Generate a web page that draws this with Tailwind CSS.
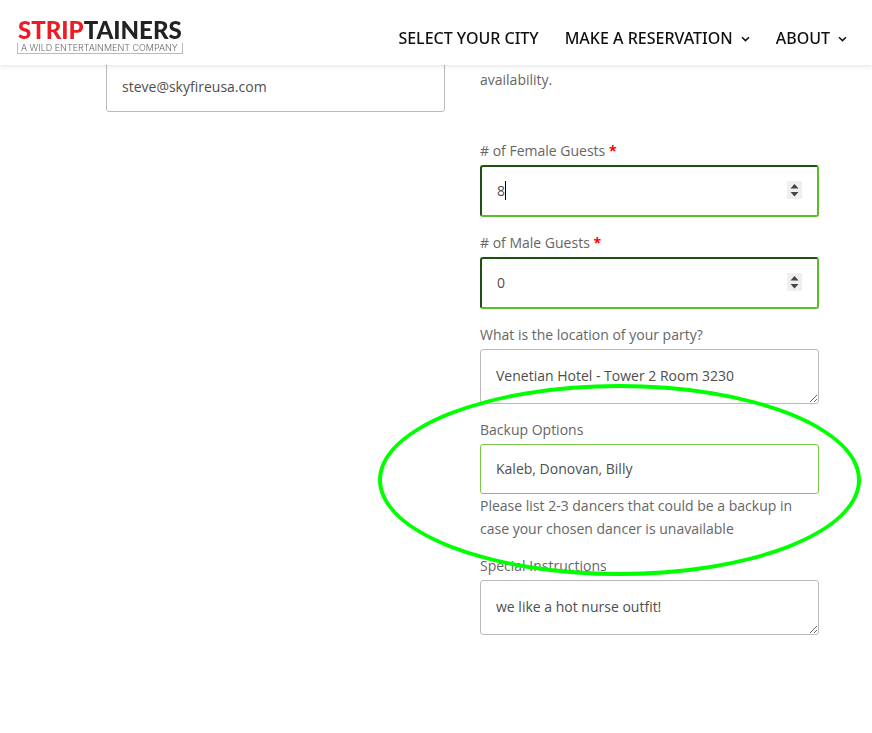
<!DOCTYPE html>
<html lang="en">
  <head>
    <meta charset="UTF-8" />
    <meta name="viewport" content="width=device-width, initial-scale=1.0" />
    <title>Make a Reservation - Striptainers</title>
    <script src="https://cdn.jsdelivr.net/npm/@tailwindcss/browser@4"></script>
  </head>
  <body class="bg-white min-h-screen font-['Open_Sans',sans-serif] text-[14px] leading-[23px] text-[#666]">

    <!-- Header -->
    <header class="fixed top-0 left-0 z-10 w-full h-[65px] bg-white shadow-[0_1px_5px_rgba(0,0,0,0.12)] pl-[17px] pr-[25px] flex justify-between items-center">
      <a href="#" class="flex flex-col gap-px pt-[6px]">
        <span class="px-px font-['Lato',sans-serif] font-black text-[24px] leading-[24px] text-[#222]"><span class="text-[#ec1c24]">STRIP</span>TAINERS</span>
        <span class="border-x border-b border-[#bbb] px-[3px] font-['Inter',sans-serif] font-light text-[9px] leading-[10px] text-[#666] whitespace-nowrap">A WILD ENTERTAINMENT COMPANY</span>
      </a>
      <nav class="flex items-center gap-[26px] pt-[12px] font-['Noto_Sans','Open_Sans',sans-serif] font-medium text-[16px] text-[#111]">
        <a href="#">SELECT YOUR CITY</a>
        <a href="#" class="flex items-center gap-2">MAKE A RESERVATION
          <svg class="w-[9px] h-[9px]" viewBox="0 0 9 9" fill="none" stroke="currentColor" stroke-width="1.5"><path d="M1 3.2 L4.5 6.6 L8 3.2" /></svg>
        </a>
        <a href="#" class="flex items-center gap-2">ABOUT
          <svg class="w-[9px] h-[9px]" viewBox="0 0 9 9" fill="none" stroke="currentColor" stroke-width="1.5"><path d="M1 3.2 L4.5 6.6 L8 3.2" /></svg>
        </a>
      </nav>
    </header>

    <!-- Booking form -->
    <main class="pt-[62px] pl-[106px] pr-[53px] pb-20">
      <form class="grid grid-cols-2 gap-[35px] items-start">
        <input type="email" aria-label="Email" value="steve@skyfireusa.com" class="block w-full h-[50px] px-[15px] pb-[2px] border border-[#bbb] rounded-[3px] text-[#4e4e4e]" />

        <div class="flex flex-col gap-[14px] pt-[6px]">
          <p class="mb-[34px]">availability.</p>

          <div>
            <label for="female" class="block mb-[3px]"># of Female Guests <span class="font-bold text-[#f00]">*</span></label>
            <div class="relative">
              <input id="female" type="number" value="8" class="block w-full h-[52px] px-[15px] pb-[2px] border-2 border-t-[#1d5210] border-l-[#1d5210] border-r-[#5abf26] border-b-[#5abf26] rounded-[3px] text-[#4e4e4e] appearance-none [&::-webkit-inner-spin-button]:appearance-none" />
              <span class="absolute left-[25px] top-[16px] w-px h-[19px] bg-black"></span>
              <svg class="absolute right-[17px] top-[16px] w-[15px] h-[18px]" viewBox="0 0 15 18"><rect width="15" height="18" fill="#efefef" /><path d="M3.5 7.5 L7.5 3 L11.5 7.5 Z M3.5 11 L7.5 15.5 L11.5 11 Z" fill="#444" /></svg>
            </div>
          </div>

          <div>
            <label for="male" class="block mb-[3px]"># of Male Guests <span class="font-bold text-[#f00]">*</span></label>
            <div class="relative">
              <input id="male" type="number" value="0" class="block w-full h-[52px] px-[15px] pb-[2px] border-2 border-t-[#1d5210] border-l-[#1d5210] border-r-[#5abf26] border-b-[#5abf26] rounded-[3px] text-[#4e4e4e] appearance-none [&::-webkit-inner-spin-button]:appearance-none" />
              <svg class="absolute right-[17px] top-[16px] w-[15px] h-[18px]" viewBox="0 0 15 18"><rect width="15" height="18" fill="#efefef" /><path d="M3.5 7.5 L7.5 3 L11.5 7.5 Z M3.5 11 L7.5 15.5 L11.5 11 Z" fill="#444" /></svg>
            </div>
          </div>

          <div>
            <label for="location" class="block mb-[3px]">What is the location of your party?</label>
            <textarea id="location" rows="1" class="block w-full h-[55px] px-[15px] py-[14px] border border-[#bbb] rounded-[3px] text-[#4e4e4e] resize overflow-hidden">Venetian Hotel - Tower 2 Room 3230</textarea>
          </div>

          <div class="relative">
            <label for="backup" class="block mb-[3px]">Backup Options</label>
            <input id="backup" type="text" value="Kaleb, Donovan, Billy" class="block w-full h-[50px] px-[15px] pb-[2px] border border-[#7ac943] rounded-[3px] text-[#4e4e4e]" />
            <p>Please list 2-3 dancers that could be a backup in case your chosen dancer is unavailable</p>
            <!-- Highlight ring -->
            <div class="absolute -left-[102px] -right-[42px] -top-[34px] -bottom-[36px] z-5 border-4 border-[#0f0] rounded-[50%] pointer-events-none"></div>
          </div>

          <div>
            <label for="special" class="block mb-[3px]">Special Instructions</label>
            <textarea id="special" rows="1" class="block w-full h-[55px] px-[15px] py-[14px] border border-[#bbb] rounded-[3px] text-[#4e4e4e] resize overflow-hidden">we like a hot nurse outfit!</textarea>
          </div>
        </div>
      </form>
    </main>

  </body>
</html>
